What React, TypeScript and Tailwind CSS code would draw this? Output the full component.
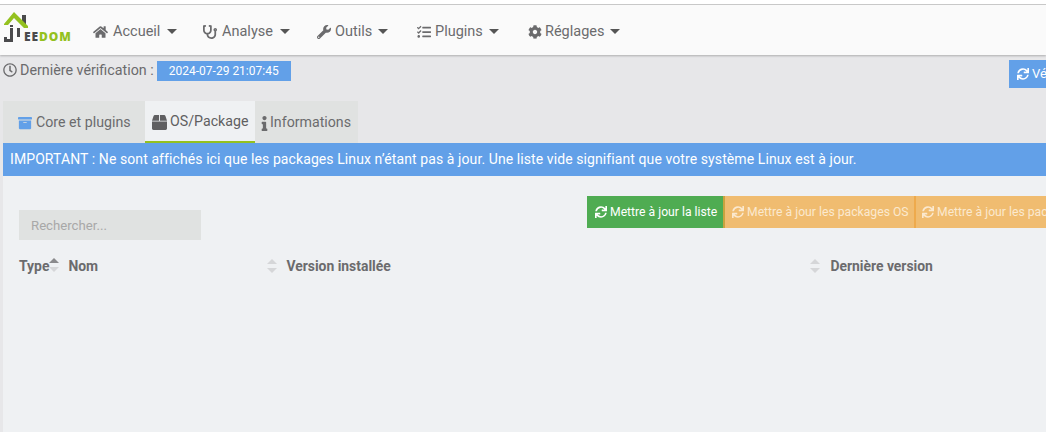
import React from "react";
import { FaHome, FaStethoscope, FaWrench, FaTasks, FaCog, FaRegClock, FaSync, FaArchive, FaBox, FaInfo } from "react-icons/fa";

const menu = [
  { label: "Accueil", icon: <FaHome className="w-[15px] h-[14px]" />, width: "w-[110px]", gap: "gap-[5px]" },
  { label: "Analyse", icon: <FaStethoscope className="w-[14px] h-[14px]" />, width: "w-[114px]", gap: "gap-[5px]" },
  { label: "Outils", icon: <FaWrench className="w-[14px] h-[14px]" />, width: "w-[100px]", gap: "gap-[4px]" },
  { label: "Plugins", icon: <FaTasks className="w-[14px] h-[14px]" />, width: "w-[111px]", gap: "gap-[4px]" },
  { label: "Réglages", icon: <FaCog className="w-[14px] h-[14px]" />, width: "w-[110px]", gap: "gap-[3px]" },
];

function Logo() {
  return (
    <div className="relative w-[76px] h-[34px] shrink-0 mb-[2px]">
      <svg viewBox="0 0 32 34" className="absolute left-0 top-0 w-[32px] h-[34px]">
        <path d="M18 3h4v10h-4z" fill="#4a4a4c" />
        <path d="M0 12 L10 0 L24 14 L24 16 L20 16 L10 6 L4 13 L0 13 Z" fill="#94c11f" />
        <path d="M6 13h3v2H6z" fill="#4a4a4c" />
        <path d="M6 16h3v14H0v-5h3v2h3z" fill="#4a4a4c" />
        <path d="M13 16h3v9h-3z" fill="#4a4a4c" />
      </svg>
      <span className="absolute left-[20px] top-[18px] font-['Open_Sans',sans-serif] font-extrabold text-[12px] leading-[14px] tracking-[0.9px] text-[#4a4a4c]">
        EE<span className="text-[#94c11f]">DOM</span>
      </span>
    </div>
  );
}

function SortArrows({ up }: { up?: boolean }) {
  return (
    <svg viewBox="0 0 10 14" className="w-[10px] h-[14px] shrink-0">
      <path d="M5 0 L10 5 H0 Z" fill={up ? "#8a8a8c" : "#d5d6d8"} />
      <path d="M5 14 L0 9 H10 Z" fill="#d5d6d8" />
    </svg>
  );
}

export default function App() {
  return (
    <div className="h-[432px] w-[1046px] overflow-hidden bg-[#e7e7e9] font-['Roboto',sans-serif] text-[#6b6b6d] flex flex-col">
      {/* barre de navigation */}
      <div className="h-[55px] shrink-0 bg-[#fafafa] shadow-[0_1px_2px_rgba(0,0,0,0.25)]">
        <div className="h-[5px] bg-white border-b border-[#c8c8c8]"></div>
        <div className="h-[50px] flex items-center pl-[4px]">
          <Logo />
          <div className="flex ml-[13px] mt-[3px]">
            {menu.map((m) => (
              <div key={m.label} className={`flex items-center text-[14.5px] ${m.gap} ${m.width}`}>
                {m.icon}
                <span>{m.label}</span>
                <span className="ml-[2px] w-0 h-0 border-x-[5px] border-x-transparent border-t-[5px] border-t-[#555]"></span>
              </div>
            ))}
          </div>
        </div>
      </div>

      {/* dernière vérification */}
      <div className="flex justify-between pl-[3px] pt-[5px] w-[1120px] shrink-0">
        <div className="flex items-start text-[14.3px] leading-[20px]">
          <FaRegClock className="w-[14px] h-[14px] mt-[3px]" />
          <span className="ml-[3px]">Dernière vérification :</span>
          <span className="ml-[3px] mt-[1px] w-[134px] h-[20px] bg-[#62a0e8] text-white text-[12px] leading-[20px] text-center">2024-07-29 21:07:45</span>
        </div>
        <div className="w-[111px] h-[28px] bg-[#62a0e8] text-white text-[13px] flex items-center pl-[8px] gap-[3px]">
          <FaSync className="w-[12px] h-[12px]" />
          <span>Vérifier</span>
        </div>
      </div>

      {/* contenu */}
      <div className="ml-[3px] mt-[13px] flex-1 flex flex-col min-h-0">
        <div className="flex h-[42px] text-[14.2px] shrink-0">
          <div className="w-[142px] bg-[#e0e2e1] flex items-center pl-[15px] gap-[4px] pt-[2px]">
            <FaArchive className="w-[14px] h-[14px] text-[#62a0e8]" />
            <span>Core et plugins</span>
          </div>
          <div className="w-[110px] bg-[#eff1f3] border-b-2 border-[#94c11f] flex items-center pl-[7px] gap-[3px] text-[#5f5f61] pt-[2px]">
            <FaBox className="w-[15px] h-[15px]" />
            <span>OS/Package</span>
          </div>
          <div className="w-[103px] bg-[#e0e2e1] flex items-center pl-[5px] gap-[1px] pt-[2px]">
            <FaInfo className="w-[9px] h-[15px]" />
            <span>Informations</span>
          </div>
        </div>
        <div className="flex-1 bg-[#eff1f3] min-h-0">
          <div className="h-[33px] bg-[#62a0e8] text-white text-[14px] leading-[33px] pl-[7px] tracking-[0.09px]">
            IMPORTANT : Ne sont affichés ici que les packages Linux n’étant pas à jour. Une liste vide signifiant que votre système Linux est à jour.
          </div>
          <div className="flex w-[1200px] pl-[16px] pt-[20px]">
            <div className="w-[182px] h-[30px] mt-[14px] bg-[#e0e2e1] text-[#a8a8a8] text-[13.2px] leading-[31px] pl-[12px] shrink-0">Rechercher...</div>
            <div className="flex ml-[386px] h-[32px] text-[12.2px] text-white">
              <div className="w-[138px] bg-[#4fac52] border-r-2 border-[#c9a33f] flex items-center pl-[8px] gap-[3px]">
                <FaSync className="w-[12px] h-[12px]" />
                <span>Mettre à jour la liste</span>
              </div>
              <div className="w-[191px] bg-[#f0bc70] border-r-2 border-[#eeaa4c] flex items-center pl-[7px] gap-[3px] text-[#fbe9cf]">
                <FaSync className="w-[12px] h-[12px]" />
                <span>Mettre à jour les packages OS</span>
              </div>
              <div className="w-[191px] bg-[#f0bc70] flex items-center pl-[6px] gap-[3px] text-[#fbe9cf]">
                <FaSync className="w-[12px] h-[12px]" />
                <span>Mettre à jour les packages</span>
              </div>
            </div>
          </div>
          <div className="flex items-center pl-[16px] mt-[16px] text-[13.9px] font-bold text-[#6b6b6d] h-[20px]">
            <span>Type</span>
            <div className="mb-[3px]"><SortArrows up /></div>
            <span className="ml-[9px] w-[199px]">Nom</span>
            <SortArrows />
            <span className="ml-[9px] w-[533px] -mr-[9px]">Version installée</span>
            <SortArrows />
            <span className="ml-[10px]">Dernière version</span>
          </div>
        </div>
      </div>
    </div>
  );
}
